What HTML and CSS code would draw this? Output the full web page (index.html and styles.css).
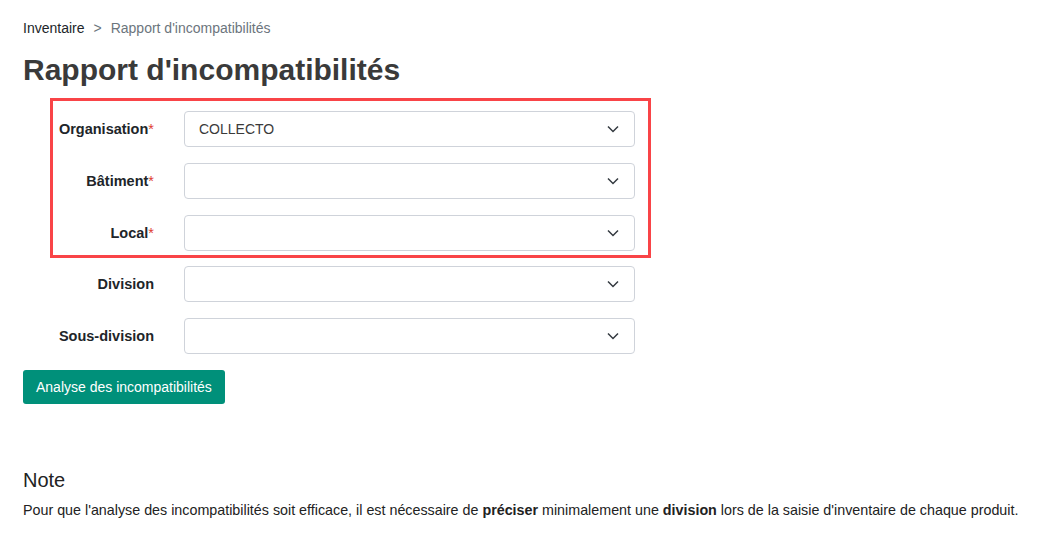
FILE: index.html
```html
<!DOCTYPE html>
<html lang="fr">
<head>
<meta charset="utf-8">
<title>Rapport d'incompatibilités</title>
<link rel="stylesheet" href="styles.css">
</head>
<body>
<div class="page">
  <nav class="breadcrumb">
    <a class="crumb-link" href="#">Inventaire</a>
    <span class="crumb-sep">&gt;</span>
    <span class="crumb-current">Rapport d'incompatibilités</span>
  </nav>
  <h1 class="title">Rapport d'incompatibilités</h1>

  <form class="form">
    <div class="highlight"></div>
    <div class="row">
      <label class="label">Organisation<span class="req">*</span></label>
      <div class="select"><span class="value">COLLECTO</span>
        <svg class="chev" width="12" height="8" viewBox="0 0 12 8"><path d="M1 1.5 L6 6.5 L11 1.5" fill="none" stroke="#343a40" stroke-width="1.5"/></svg>
      </div>
    </div>
    <div class="row">
      <label class="label">Bâtiment<span class="req">*</span></label>
      <div class="select"><span class="value"></span>
        <svg class="chev" width="12" height="8" viewBox="0 0 12 8"><path d="M1 1.5 L6 6.5 L11 1.5" fill="none" stroke="#343a40" stroke-width="1.5"/></svg>
      </div>
    </div>
    <div class="row">
      <label class="label">Local<span class="req">*</span></label>
      <div class="select"><span class="value"></span>
        <svg class="chev" width="12" height="8" viewBox="0 0 12 8"><path d="M1 1.5 L6 6.5 L11 1.5" fill="none" stroke="#343a40" stroke-width="1.5"/></svg>
      </div>
    </div>
    <div class="row">
      <label class="label">Division</label>
      <div class="select"><span class="value"></span>
        <svg class="chev" width="12" height="8" viewBox="0 0 12 8"><path d="M1 1.5 L6 6.5 L11 1.5" fill="none" stroke="#343a40" stroke-width="1.5"/></svg>
      </div>
    </div>
    <div class="row">
      <label class="label">Sous-division</label>
      <div class="select"><span class="value"></span>
        <svg class="chev" width="12" height="8" viewBox="0 0 12 8"><path d="M1 1.5 L6 6.5 L11 1.5" fill="none" stroke="#343a40" stroke-width="1.5"/></svg>
      </div>
    </div>
    <div class="actions">
      <button type="button" class="btn">Analyse des incompatibilités</button>
    </div>
  </form>

  <h2 class="note-title">Note</h2>
  <p class="note-text">Pour que l'analyse des incompatibilités soit efficace, il est nécessaire de <strong>préciser</strong> minimalement une <strong>division</strong> lors de la saisie d'inventaire de chaque produit.</p>
</div>
</body>
</html>
```

FILE: styles.css
```css
html, body {
  margin: 0;
  padding: 0;
  background: #ffffff;
}
body {
  font-family: "Liberation Sans", Arial, sans-serif;
  color: #212529;
}
.page {
  padding: 18px 16px 0 23px;
}
.breadcrumb {
  display: flex;
  align-items: center;
  gap: 9px;
  font-size: 14px;
  line-height: 20px;
}
.crumb-link {
  color: #212529;
  text-decoration: none;
}
.crumb-sep {
  color: #6c757d;
}
.crumb-current {
  color: #6c757d;
}
.title {
  margin: 15px 0 0 0;
  font-size: 30px;
  line-height: 34px;
  font-weight: bold;
  color: #3a3a3a;
}
.form {
  position: relative;
  margin-top: 24px;
  display: flex;
  flex-direction: column;
  gap: 15.75px;
}
.highlight {
  position: absolute;
  left: 27px;
  top: -13px;
  width: 595px;
  height: 154px;
  border: 3px solid #f94447;
  pointer-events: none;
}
.row {
  display: flex;
  align-items: center;
  gap: 30px;
}
.label {
  width: 131px;
  text-align: right;
  font-size: 14.5px;
  font-weight: bold;
  color: #212529;
}
.req {
  color: #e03c31;
  font-weight: normal;
}
.select {
  width: 451px;
  height: 36px;
  box-sizing: border-box;
  border: 1px solid #cfd3da;
  border-radius: 4px;
  display: flex;
  align-items: center;
  justify-content: space-between;
  padding: 0 15px 0 14px;
  background: #fff;
}
.value {
  font-size: 14px;
  color: #3a3a3a;
}
.chev {
  display: block;
}
.actions {
  display: flex;
}
.btn {
  height: 34px;
  padding: 0 13px;
  border: none;
  border-radius: 3px;
  background: #00907a;
  color: #ffffff;
  font-family: "Liberation Sans", Arial, sans-serif;
  font-size: 14px;
}
.note-title {
  margin: 64px 0 0 0;
  font-size: 20px;
  line-height: 24px;
  font-weight: normal;
  color: #222;
}
.note-text {
  margin: 9px 0 0 0;
  font-size: 14.3px;
  line-height: 18px;
  color: #222;
  white-space: nowrap;
}
```
